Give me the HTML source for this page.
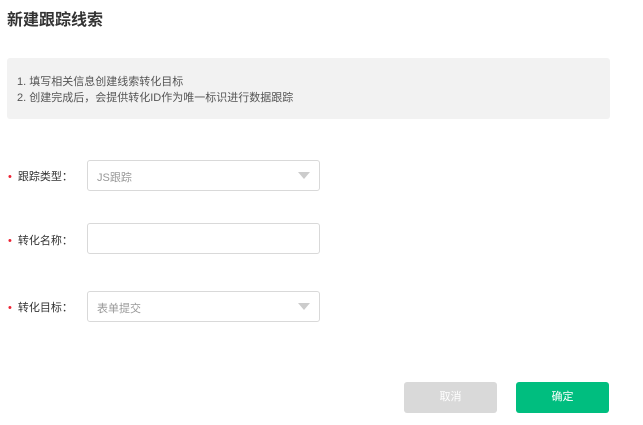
<!DOCTYPE html>
<html><head><meta charset="utf-8"><style>
body{margin:0;width:643px;height:425px;background:#fff;font-family:"Liberation Sans","Noto Sans CJK SC",sans-serif;position:relative;overflow:hidden}
.a{position:absolute}
.t{left:7px;top:6px;font-size:16px;font-weight:bold;color:#333}
.box{left:7px;top:58px;width:603px;height:61px;background:#f2f2f2;border-radius:3px}
.box div{position:absolute;left:10px;font-size:11px;color:#555}
.lbl{left:8px;font-size:11px;color:#333}
.lbl b{color:#e23;font-weight:normal;margin-right:6px}
.f{left:87px;width:231px;height:29px;border:1px solid #d9d9d9;border-radius:3px;font-size:11px;color:#999}
.f span{position:absolute;left:9px;top:8px}
.f i{position:absolute;right:9px;top:11px;width:0;height:0;border-left:6px solid transparent;border-right:6px solid transparent;border-top:7px solid #ccc}
.btn{top:382px;width:93px;height:31px;border-radius:3px;color:#fff;font-size:11px;text-align:center;line-height:31px}
</style></head><body>
<div class="a t">新建跟踪线索</div>
<div class="a box"><div style="top:15px">1. 填写相关信息创建线索转化目标</div><div style="top:31px">2. 创建完成后，会提供转化ID作为唯一标识进行数据跟踪</div></div>
<div class="a lbl" style="top:168px"><b>•</b>跟踪类型：</div>
<div class="a f" style="top:160px"><span>JS跟踪</span><i></i></div>
<div class="a lbl" style="top:232px"><b>•</b>转化名称：</div>
<div class="a f" style="top:223px"></div>
<div class="a lbl" style="top:299px"><b>•</b>转化目标：</div>
<div class="a f" style="top:291px"><span>表单提交</span><i></i></div>
<div class="a btn" style="left:404px;background:#d9d9d9">取消</div>
<div class="a btn" style="left:516px;background:#00be7f">确定</div>
</body></html>
